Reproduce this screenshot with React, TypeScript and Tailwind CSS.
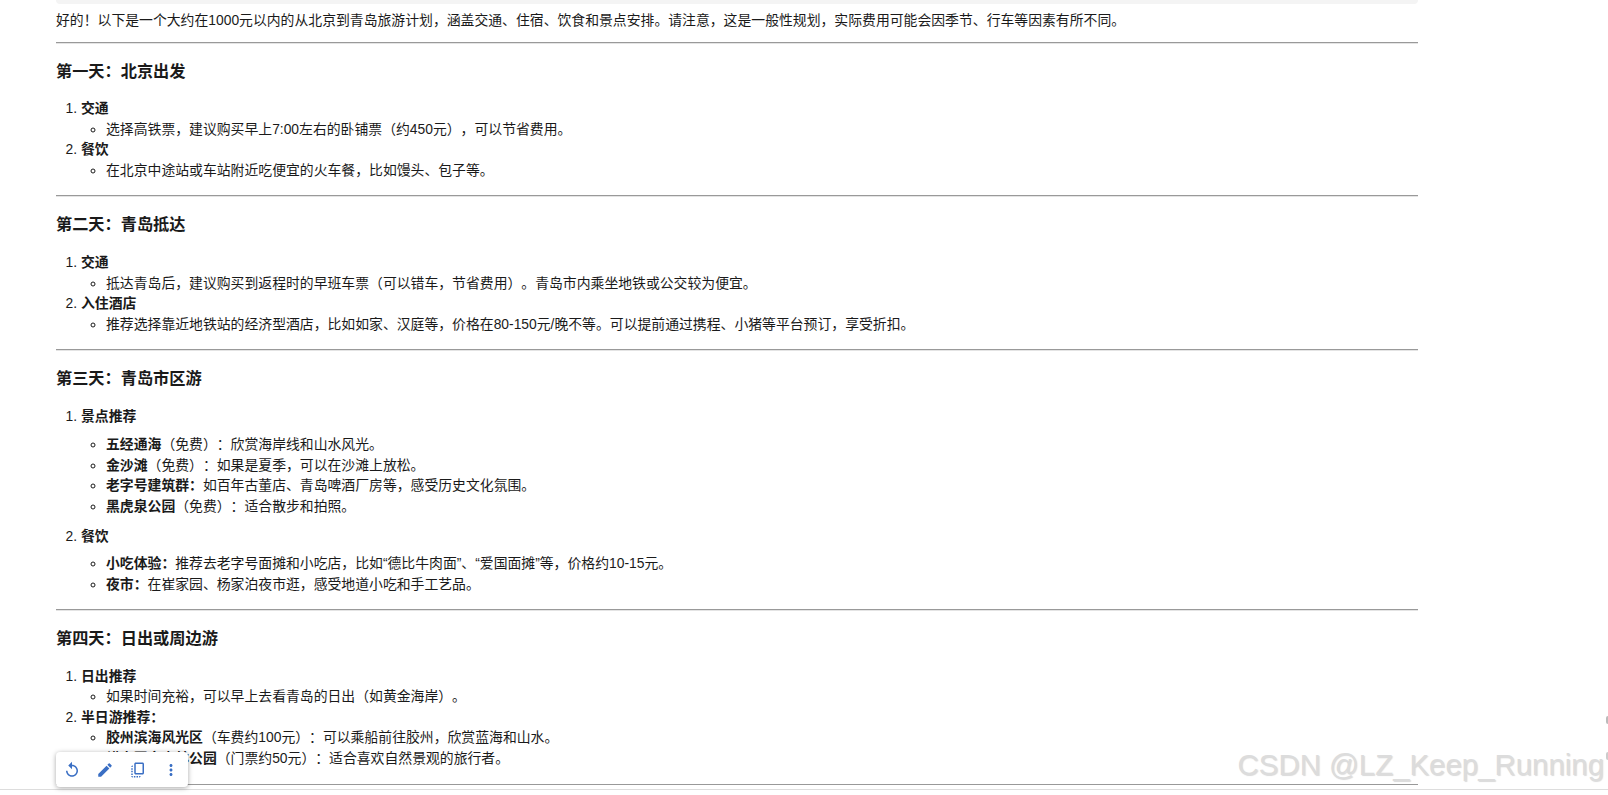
import { MdReplay, MdEdit, MdOutlineCopyAll, MdMoreVert } from 'react-icons/md';

type Sub = { b?: string; t: string };
type Item = { title: string; subs: Sub[]; loose?: boolean };
type Day = { title: string; items: Item[] };

const days: Day[] = [
  {
    title: '第一天：北京出发',
    items: [
      { title: '交通', subs: [{ t: '选择高铁票，建议购买早上7:00左右的卧铺票（约450元），可以节省费用。' }] },
      { title: '餐饮', subs: [{ t: '在北京中途站或车站附近吃便宜的火车餐，比如馒头、包子等。' }] },
    ],
  },
  {
    title: '第二天：青岛抵达',
    items: [
      { title: '交通', subs: [{ t: '抵达青岛后，建议购买到返程时的早班车票（可以错车，节省费用）。青岛市内乘坐地铁或公交较为便宜。' }] },
      { title: '入住酒店', subs: [{ t: '推荐选择靠近地铁站的经济型酒店，比如如家、汉庭等，价格在80-150元/晚不等。可以提前通过携程、小猪等平台预订，享受折扣。' }] },
    ],
  },
  {
    title: '第三天：青岛市区游',
    items: [
      {
        title: '景点推荐',
        loose: true,
        subs: [
          { b: '五经通海', t: '（免费）：欣赏海岸线和山水风光。' },
          { b: '金沙滩', t: '（免费）：如果是夏季，可以在沙滩上放松。' },
          { b: '老字号建筑群：', t: '如百年古董店、青岛啤酒厂房等，感受历史文化氛围。' },
          { b: '黑虎泉公园', t: '（免费）：适合散步和拍照。' },
        ],
      },
      {
        title: '餐饮',
        loose: true,
        subs: [
          { b: '小吃体验：', t: '推荐去老字号面摊和小吃店，比如“德比牛肉面”、“爱国面摊”等，价格约10-15元。' },
          { b: '夜市：', t: '在崔家园、杨家泊夜市逛，感受地道小吃和手工艺品。' },
        ],
      },
    ],
  },
  {
    title: '第四天：日出或周边游',
    items: [
      { title: '日出推荐', subs: [{ t: '如果时间充裕，可以早上去看青岛的日出（如黄金海岸）。' }] },
      {
        title: '半日游推荐：',
        subs: [
          { b: '胶州滨海风光区', t: '（车费约100元）：可以乘船前往胶州，欣赏蓝海和山水。' },
          { b: '崂山国家森林公园', t: '（门票约50元）：适合喜欢自然景观的旅行者。' },
        ],
      },
    ],
  },
];

export default function App() {
  return (
    <div className="relative h-[795px] overflow-hidden bg-white font-['Liberation_Sans','Noto_Sans_CJK_SC',sans-serif] text-[13.85px] leading-[20.6px] text-[#1a1a1a] [text-spacing-trim:space-all]">
      <div className="ml-[56px] w-[1362px]">
        <div className="h-1 rounded-b-md bg-[#f4f4f4]" />
        <p className="mt-[6px] mb-[11px]">好的！以下是一个大约在1000元以内的从北京到青岛旅游计划，涵盖交通、住宿、饮食和景点安排。请注意，这是一般性规划，实际费用可能会因季节、行车等因素有所不同。</p>
        {days.map((day) => (
          <section key={day.title}>
            <hr className="border-t border-[#999] shadow-[0_1px_0_#e4e4e4]" />
            <h3 className="mt-[16px] mb-[15.5px] text-[16.2px] leading-[24px] font-semibold">{day.title}</h3>
            <ol className="mb-[15px] list-decimal pl-[25px]">
              {day.items.map((item, i) => (
                <li key={item.title}>
                  <strong className={item.loose ? (i === 0 ? 'mb-[7.5px] block font-semibold' : 'mb-[6px] block font-semibold') : 'font-semibold'}>{item.title}</strong>
                  <ul className={item.loose ? (i === 0 ? 'mb-[10px] list-[circle] pl-[25px]' : 'mb-[5px] list-[circle] pl-[25px]') : 'list-[circle] pl-[25px]'}>
                    {item.subs.map((s) => (
                      <li key={s.t}>
                        {s.b ? <strong className="font-semibold">{s.b}</strong> : null}
                        {s.t}
                      </li>
                    ))}
                  </ul>
                </li>
              ))}
            </ol>
          </section>
        ))}
        <hr className="border-t border-[#999]" />
      </div>

      <div className="absolute bottom-0 left-0 h-[6px] w-full border-t border-[#ddd] bg-white" />

      <div className="absolute top-[752px] left-[56px] flex h-[35px] w-[132px] items-center gap-[15px] rounded-[4px] bg-white pl-[7px] text-[#3a6fc4] shadow-[0_1px_5px_rgba(0,0,0,0.35)]">
        <MdReplay size={18} />
        <MdEdit size={18} />
        <MdOutlineCopyAll size={18} />
        <MdMoreVert size={18} />
      </div>

      <div className="absolute top-[749px] right-[4px] font-['Liberation_Sans',sans-serif] text-[29.4px] leading-[32px] text-[#dcdcdc] [text-shadow:1px_1px_1px_rgba(0,0,0,0.15)]">
        CSDN @LZ_Keep_Running
      </div>
      <div className="absolute top-[716px] right-0 h-[8px] w-[2px] rounded-l-full bg-[#bbb]" />
      <div className="absolute top-[752px] right-0 h-[8px] w-[2px] rounded-l-full bg-[#ccc]" />
    </div>
  );
}
